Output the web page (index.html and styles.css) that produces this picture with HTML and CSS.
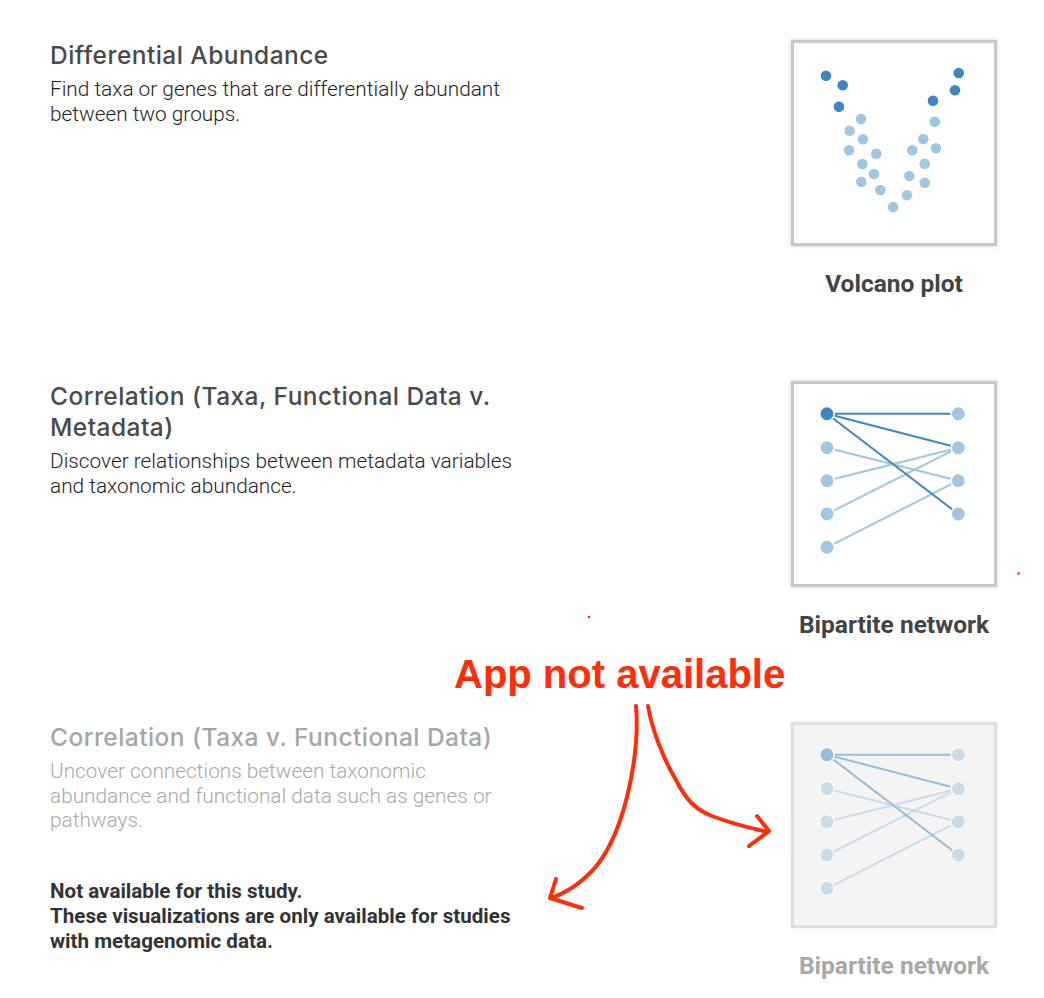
FILE: index.html
```html
<!DOCTYPE html>
<html>
<head>
<meta charset="utf-8">
<link rel="stylesheet" href="styles.css">
</head>
<body>
<div class="page">
  <section class="row">
    <div class="info">
      <h2 class="title">Differential Abundance</h2>
      <p class="desc">Find taxa or genes that are differentially abundant between two groups.</p>
    </div>
    <div class="tile">
      <div class="card">
        <svg class="plot" viewBox="0 0 200 200" width="200" height="200">
          <g fill="#a1c6e1">
            <circle cx="67" cy="76" r="5.3"/><circle cx="55.7" cy="87.7" r="5.3"/><circle cx="69" cy="96.3" r="5.3"/>
            <circle cx="55" cy="107.3" r="5.3"/><circle cx="82.3" cy="110.7" r="5.3"/><circle cx="68.3" cy="121" r="5.3"/>
            <circle cx="80" cy="131" r="5.3"/><circle cx="67.3" cy="138.7" r="5.3"/><circle cx="86.3" cy="147" r="5.3"/>
            <circle cx="99" cy="164" r="5.3"/><circle cx="113" cy="152.3" r="5.3"/><circle cx="115.3" cy="133" r="5.3"/>
            <circle cx="130.7" cy="139.7" r="5.3"/><circle cx="130.7" cy="120.7" r="5.3"/><circle cx="118.3" cy="107.3" r="5.3"/>
            <circle cx="142" cy="105.3" r="5.3"/><circle cx="129.3" cy="96" r="5.3"/><circle cx="140.7" cy="78.7" r="5.3"/>
          </g>
          <g fill="#3c87c1">
            <circle cx="32" cy="32.7" r="5.3"/><circle cx="48.7" cy="42.3" r="5.3"/><circle cx="45" cy="63.7" r="5.3"/>
            <circle cx="164.7" cy="30" r="5.3"/><circle cx="161" cy="47.3" r="5.3"/><circle cx="139" cy="57.7" r="5.3"/>
          </g>
        </svg>
      </div>
      <div class="label">Volcano plot</div>
    </div>
  </section>

  <section class="row">
    <div class="info">
      <h2 class="title">Correlation (Taxa, Functional Data v. Metadata)</h2>
      <p class="desc">Discover relationships between metadata variables and taxonomic abundance.</p>
    </div>
    <div class="tile">
      <div class="card">
        <svg class="plot" viewBox="0 0 200 200" width="200" height="200">
          <g stroke="#a1c6e1" stroke-width="2">
            <line x1="33" y1="63.7" x2="164.3" y2="96.7"/>
            <line x1="33" y1="96.7" x2="164.3" y2="63.7"/>
            <line x1="33" y1="130" x2="164.3" y2="63.7"/>
            <line x1="33" y1="163.3" x2="164.3" y2="96.7"/>
          </g>
          <g stroke="#3c87c1" stroke-width="2">
            <line x1="33" y1="29.7" x2="164.3" y2="29.7"/>
            <line x1="33" y1="29.7" x2="164.3" y2="63.7"/>
            <line x1="33" y1="29.7" x2="164.3" y2="130"/>
          </g>
          <g stroke="#fff" stroke-width="1.5">
            <circle cx="33" cy="29.7" r="7.2" fill="#3c87c1"/>
            <circle cx="33" cy="63.7" r="7.2" fill="#a1c6e1"/>
            <circle cx="33" cy="96.7" r="7.2" fill="#a1c6e1"/>
            <circle cx="33" cy="130" r="7.2" fill="#a1c6e1"/>
            <circle cx="33" cy="163.3" r="7.2" fill="#a1c6e1"/>
            <circle cx="164.3" cy="29.7" r="7.2" fill="#a1c6e1"/>
            <circle cx="164.3" cy="63.7" r="7.2" fill="#a1c6e1"/>
            <circle cx="164.3" cy="96.7" r="7.2" fill="#a1c6e1"/>
            <circle cx="164.3" cy="130" r="7.2" fill="#a1c6e1"/>
          </g>
        </svg>
      </div>
      <div class="label">Bipartite network</div>
    </div>
  </section>

  <section class="row disabled">
    <div class="info">
      <h2 class="title">Correlation (Taxa v. Functional Data)</h2>
      <p class="desc">Uncover connections between taxonomic abundance and functional data such as genes or pathways.</p>
      <p class="note">Not available for this study.<br>These visualizations are only available for studies with metagenomic data.</p>
    </div>
    <div class="tile">
      <div class="card">
        <svg class="plot" viewBox="0 0 200 200" width="200" height="200">
          <g stroke="#a1c6e1" stroke-width="2">
            <line x1="33" y1="63.7" x2="164.3" y2="96.7"/>
            <line x1="33" y1="96.7" x2="164.3" y2="63.7"/>
            <line x1="33" y1="130" x2="164.3" y2="63.7"/>
            <line x1="33" y1="163.3" x2="164.3" y2="96.7"/>
          </g>
          <g stroke="#3c87c1" stroke-width="2">
            <line x1="33" y1="29.7" x2="164.3" y2="29.7"/>
            <line x1="33" y1="29.7" x2="164.3" y2="63.7"/>
            <line x1="33" y1="29.7" x2="164.3" y2="130"/>
          </g>
          <g stroke="#fff" stroke-width="1.5">
            <circle cx="33" cy="29.7" r="7.2" fill="#3c87c1"/>
            <circle cx="33" cy="63.7" r="7.2" fill="#a1c6e1"/>
            <circle cx="33" cy="96.7" r="7.2" fill="#a1c6e1"/>
            <circle cx="33" cy="130" r="7.2" fill="#a1c6e1"/>
            <circle cx="33" cy="163.3" r="7.2" fill="#a1c6e1"/>
            <circle cx="164.3" cy="29.7" r="7.2" fill="#a1c6e1"/>
            <circle cx="164.3" cy="63.7" r="7.2" fill="#a1c6e1"/>
            <circle cx="164.3" cy="96.7" r="7.2" fill="#a1c6e1"/>
            <circle cx="164.3" cy="130" r="7.2" fill="#a1c6e1"/>
          </g>
        </svg>
      </div>
      <div class="label">Bipartite network</div>
    </div>
  </section>

  <div class="annotation">App not available</div>
  <svg class="scribble" width="1044" height="998" viewBox="0 0 1044 998">
    <g fill="none" stroke="#ff2d0a" stroke-width="4" stroke-linecap="round" stroke-linejoin="round">
      <path d="M636 706 C638 730 636 760 627 797 C620 825 610 848 598 864 C585 880 568 892 551 898"/>
      <path d="M556 879 L550 898 L582 908"/>
      <path d="M648 706 C652 730 664 760 676 780 C686 800 696 810 712 816 C730 823 750 828 768 832"/>
      <path d="M757 816 L769 831 L749 846"/>
    </g>
    <circle cx="589" cy="617" r="1.3" fill="#ff2d0a"/>
    <circle cx="1018.5" cy="573.5" r="1.3" fill="#ff2d0a"/>
  </svg>
</div>
</body>
</html>
```
FILE: styles.css
```css
html, body {
  margin: 0;
  padding: 0;
  background: #ffffff;
}

.page {
  position: relative;
  width: 1044px;
  height: 998px;
  padding: 40px 0 0 50px;
  box-sizing: border-box;
  font-family: Roboto, "Liberation Sans", sans-serif;
}

.row {
  display: flex;
  align-items: flex-start;
  justify-content: space-between;
  width: 947px;
  margin-bottom: 83px;
}

.info {
  width: 468px;
}

.title {
  margin: 0 0 6px 0;
  font-family: Inter, Roboto, sans-serif;
  font-size: 24.5px;
  line-height: 31px;
  font-weight: 500;
  letter-spacing: 0.45px;
  color: #4a4a4a;
}

.desc {
  margin: 0;
  font-size: 20.8px;
  line-height: 24.5px;
  font-weight: 300;
  color: #1e1e1e;
}

.note {
  margin: 46px 0 0 0;
  font-size: 20.6px;
  line-height: 25px;
  font-weight: 700;
  color: #333333;
}

.tile {
  width: 206px;
  display: flex;
  flex-direction: column;
  align-items: center;
}

.card {
  width: 200px;
  height: 200px;
  border: 3px solid #c8c8c8;
  background: #ffffff;
  box-shadow: 0 0 4px rgba(0, 0, 0, 0.18);
}

.plot {
  display: block;
}

.label {
  margin-top: 24px;
  font-size: 24.5px;
  line-height: 28px;
  font-weight: 700;
  color: #444444;
}

.disabled .title { color: #a6a6a6; }
.disabled .desc { color: #a9a9a9; }
.disabled .card {
  background: #f4f4f4;
  border-color: #dedede;
  box-shadow: 0 0 4px rgba(0, 0, 0, 0.08);
}
.disabled .plot { opacity: 0.5; }
.disabled .label { color: #a8a8a8; }

.annotation {
  position: absolute;
  left: 454px;
  top: 651px;
  font-family: "Liberation Sans", Arial, sans-serif;
  font-size: 40px;
  line-height: 46px;
  font-weight: 700;
  color: #ff2d0a;
  white-space: nowrap;
}

.scribble {
  position: absolute;
  left: 0;
  top: 0;
  pointer-events: none;
}
```
